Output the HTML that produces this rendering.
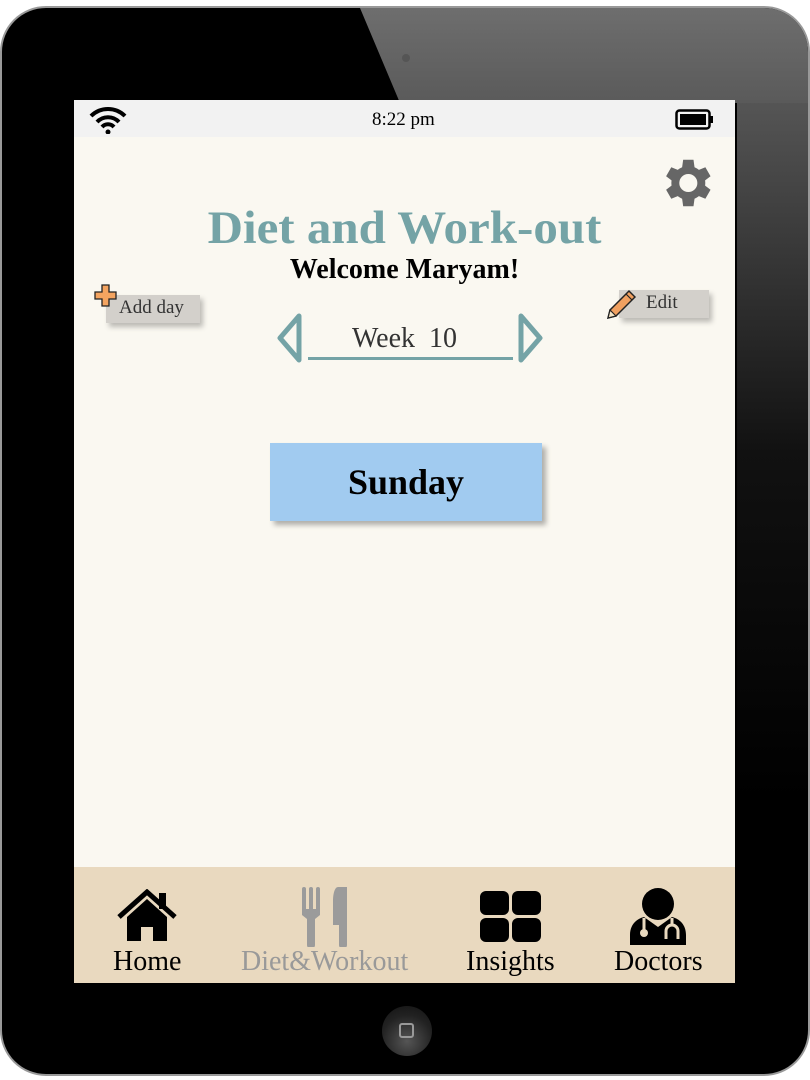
<!DOCTYPE html>
<html><head><style>
*{margin:0;padding:0;box-sizing:border-box}
body{width:810px;height:1080px;background:#fff;position:relative;overflow:hidden;font-family:"Liberation Serif",serif}
.dev{position:absolute;left:0;top:6px;width:810px;height:1070px;background:#000;border-radius:46px;border:2px solid #999;overflow:hidden}
.screen{position:absolute;left:74px;top:100px;width:661px;height:883px;background:#faf8f1;overflow:hidden}
.status{position:absolute;left:0;top:0;width:661px;height:37px;background:#f2f2f2}
.abs{position:absolute}
.nav{position:absolute;left:0;top:767px;width:661px;height:116px;background:#e9d9bf}
.lbl{position:absolute;font-size:28px;top:79px;white-space:nowrap}
.btn{position:absolute;background:#d3d0cb;box-shadow:3px 4px 5px rgba(0,0,0,.25);font-size:19px;color:#333}
</style></head><body>
<div class="dev">
<svg class="abs" style="left:0;top:0" width="810" height="1070"><defs><linearGradient id="g" x1="0" y1="0" x2="0" y2="1"><stop offset="0" stop-color="#6e6e6e"/><stop offset="1" stop-color="#5a5a5a"/></linearGradient><linearGradient id="r" x1="0" y1="0" x2="0" y2="1"><stop offset="0" stop-color="#555"/><stop offset="0.5" stop-color="#111"/><stop offset="1" stop-color="#000"/></linearGradient></defs><rect x="735" y="94" width="75" height="700" fill="url(#r)"/><polygon points="358,0 810,0 810,95 398,95" fill="url(#g)"/><circle cx="404" cy="50" r="4" fill="#555"/></svg>
<div class="abs" style="left:380px;top:998px;width:50px;height:50px;border-radius:50%;background:radial-gradient(circle at 50% 70%,#555,#222 60%,#111)"></div>
<div class="abs" style="left:397px;top:1015px;width:15px;height:15px;border:2px solid #999;border-radius:3px"></div>
</div>
<div class="screen">
<div class="status">
<svg class="abs" style="left:14px;top:6px" width="40" height="28" viewBox="0 0 40 28"><path d="M3 10 A24 24 0 0 1 37 10" stroke="#000" stroke-width="4" fill="none"/><path d="M9 16 A15 15 0 0 1 31 16" stroke="#000" stroke-width="4" fill="none"/><path d="M14 21 A8 8 0 0 1 26 21" stroke="#000" stroke-width="4" fill="none"/><circle cx="20" cy="26" r="2.5"/></svg>
<div class="abs" style="left:298px;top:9px;font-size:19px">8:22 pm</div>
<svg class="abs" style="left:601px;top:9px" width="40" height="22"><rect x="1.5" y="1.5" width="33" height="18" rx="3" fill="none" stroke="#000" stroke-width="2.5"/><rect x="5" y="5" width="26" height="11" fill="#000"/><rect x="35" y="7" width="3" height="7" fill="#000"/></svg>
</div>
<svg class="abs" style="left:581px;top:52px" width="62" height="62" viewBox="0 0 24 24"><path fill="#666" d="M19.4 13a7.5 7.5 0 0 0 0-2l2.1-1.6-2-3.5-2.5 1a7.6 7.6 0 0 0-1.7-1L14.9 3h-4l-.4 2.9a7.6 7.6 0 0 0-1.7 1l-2.5-1-2 3.5L6.4 11a7.5 7.5 0 0 0 0 2l-2.1 1.6 2 3.5 2.5-1a7.6 7.6 0 0 0 1.7 1l.4 2.9h4l.4-2.9a7.6 7.6 0 0 0 1.7-1l2.5 1 2-3.5zM12.9 15.5a3.5 3.5 0 1 1 0-7 3.5 3.5 0 0 1 0 7z"/></svg>
<div class="abs" style="left:0;width:661px;top:99px;text-align:center;font-size:49px;font-weight:bold;color:#74a3a6;transform:scaleY(.95)">Diet and Work-out</div>
<div class="abs" style="left:0;width:661px;top:154px;text-align:center;font-size:28px;font-weight:bold">Welcome Maryam!</div>
<div class="btn" style="left:32px;top:195px;width:94px;height:28px;padding:2px 0 0 13px">Add day</div>
<svg class="abs" style="left:19px;top:183px" width="26" height="26"><path d="M9 2h7v7h7v7h-7v7H9v-7H2V9h7z" fill="#f4a460" stroke="#222" stroke-width="1.3"/></svg>
<div class="btn" style="left:545px;top:190px;width:90px;height:28px;padding:2px 0 0 27px">Edit</div>
<svg class="abs" style="left:530px;top:185px" width="36" height="36" viewBox="0 0 36 36"><path d="M4 33l2-8 19-19 6 6-19 19z" fill="#f0a060" stroke="#222" stroke-width="1.5"/><path d="M4 33l2-8 6 6z" fill="#f5e6c8" stroke="#222" stroke-width="1.2"/><path d="M22 9l6 6" stroke="#222" stroke-width="1.2"/></svg>
<svg class="abs" style="left:200px;top:212px" width="275" height="52"><path d="M25 4 L6 26 L25 48 Z" fill="none" stroke="#74a3a6" stroke-width="5" stroke-linejoin="round"/><path d="M247 4 L266 26 L247 48 Z" fill="none" stroke="#74a3a6" stroke-width="5" stroke-linejoin="round"/><rect x="34" y="45" width="205" height="3" fill="#74a3a6"/></svg>
<div class="abs" style="left:0;width:661px;top:223px;text-align:center;font-size:28px;color:#333">Week&nbsp; 10</div>
<div class="abs" style="left:196px;top:343px;width:272px;height:78px;background:#a1cbf0;box-shadow:4px 4px 5px rgba(0,0,0,.3);text-align:center;font-size:36px;font-weight:bold;line-height:78px">Sunday</div>
<div class="nav">
<svg class="abs" style="left:42px;top:22px" width="62" height="54" viewBox="0 0 62 54"><path d="M3 28 L31 3 L59 28" stroke="#000" stroke-width="5" fill="none"/><rect x="43" y="4" width="7" height="16"/><path d="M11 28 L31 10 L51 28 V52 H37 V38 H25 V52 H11z"/></svg>
<div class="lbl" style="left:39px">Home</div>
<svg class="abs" style="left:228px;top:20px" width="50" height="60"><rect x="0" y="0" width="4" height="25" rx="2" fill="#9b9b9b"/><rect x="7" y="0" width="4" height="25" rx="2" fill="#9b9b9b"/><rect x="14" y="0" width="4" height="25" rx="2" fill="#9b9b9b"/><path d="M0 22h18v6l-5 4v26a3 3 0 0 1-8 0V32l-5-4z" fill="#9b9b9b"/><path d="M36 0h9v58a3 3 0 0 1-8 0V38h-6V14c0-8 2-14 5-14z" fill="#9b9b9b"/></svg>
<div class="lbl" style="left:167px;color:#999">Diet&amp;Workout</div>
<svg class="abs" style="left:406px;top:24px" width="62" height="52"><rect x="0" y="0" width="29" height="24" rx="6"/><rect x="32" y="0" width="29" height="24" rx="6"/><rect x="0" y="27" width="29" height="24" rx="6"/><rect x="32" y="27" width="29" height="24" rx="6"/></svg>
<div class="lbl" style="left:392px">Insights</div>
<svg class="abs" style="left:554px;top:20px" width="60" height="60" viewBox="0 0 60 60"><circle cx="30" cy="17" r="16"/><path d="M2 58 V48 C2 38 8 32 16 30 L30 40 L44 30 C52 32 58 38 58 48 V58z"/><path d="M16 31v12" stroke="#e9d9bf" stroke-width="3"/><circle cx="16" cy="46" r="4" fill="#e9d9bf"/><path d="M38 52v-8a6 6 0 0 1 12 0v8" stroke="#e9d9bf" stroke-width="3" fill="none"/><path d="M44 31v7" stroke="#e9d9bf" stroke-width="3"/></svg>
<div class="lbl" style="left:540px">Doctors</div>
</div>
</div>
</body></html>
